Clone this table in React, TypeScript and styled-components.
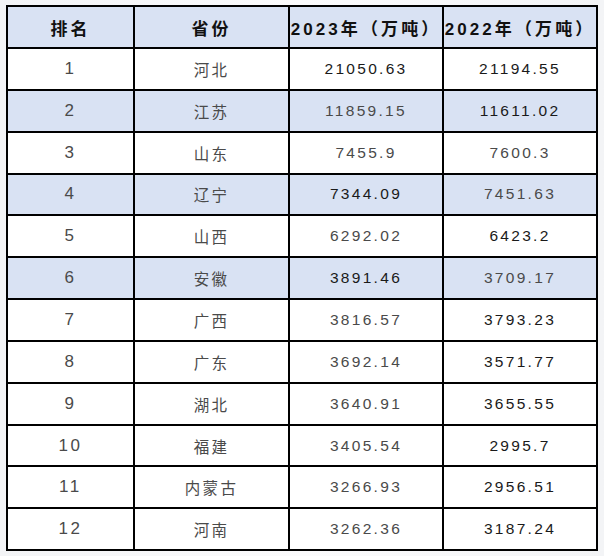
import React from 'react';
import styled, { createGlobalStyle } from 'styled-components';

const GlobalStyle = createGlobalStyle`
    html, body {
        margin: 0;
        padding: 0;
        background: #f5f6f8;
    }
    body {
        font-family: "Liberation Sans", "Noto Sans CJK SC", sans-serif;
    }
`;

const Page = styled.div`
    width: 604px;
    height: 556px;
    box-sizing: border-box;
    padding: 5px 0 0 6px;
    background: linear-gradient(90deg, #f3f4f6 0%, #fbfbfc 50%, #f3f4f6 100%);
`;

const Table = styled.table`
    border-collapse: collapse;
    table-layout: fixed;
    width: 592px;
`;

const HeadCell = styled.th`
    height: 40px;
    padding: 0;
    border: 2px solid #000;
    background: #d9e2f3;
    color: #111;
    font-size: 17px;
    font-weight: bold;
    letter-spacing: 3.1px;
    text-align: center;
    white-space: nowrap;
    overflow: visible;
`;

const Row = styled.tr<{ $shaded: boolean }>`
    background: ${(p) => (p.$shaded ? '#d9e2f3' : '#ffffff')};
`;

const Cell = styled.td<{ $muted?: boolean; $big?: boolean }>`
    height: 39.85px;
    padding: 0;
    border: 2px solid #000;
    color: ${(p) => (p.$muted ? '#4a4a4a' : '#1a1a1a')};
    font-size: ${(p) => (p.$big ? '17px' : '15.5px')};
    letter-spacing: ${(p) => (p.$big ? '2.6px' : '2.3px')};
    text-align: center;
    white-space: nowrap;
`;

type Entry = {
    rank: number
    province: string
    y2023: string
    y2022: string
    muted2023: boolean
    muted2022: boolean
}

const rows: Entry[] = [
    { rank: 1, province: '河北', y2023: '21050.63', y2022: '21194.55', muted2023: false, muted2022: false },
    { rank: 2, province: '江苏', y2023: '11859.15', y2022: '11611.02', muted2023: true, muted2022: false },
    { rank: 3, province: '山东', y2023: '7455.9', y2022: '7600.3', muted2023: true, muted2022: true },
    { rank: 4, province: '辽宁', y2023: '7344.09', y2022: '7451.63', muted2023: false, muted2022: true },
    { rank: 5, province: '山西', y2023: '6292.02', y2022: '6423.2', muted2023: true, muted2022: false },
    { rank: 6, province: '安徽', y2023: '3891.46', y2022: '3709.17', muted2023: false, muted2022: true },
    { rank: 7, province: '广西', y2023: '3816.57', y2022: '3793.23', muted2023: true, muted2022: false },
    { rank: 8, province: '广东', y2023: '3692.14', y2022: '3571.77', muted2023: true, muted2022: false },
    { rank: 9, province: '湖北', y2023: '3640.91', y2022: '3655.55', muted2023: true, muted2022: false },
    { rank: 10, province: '福建', y2023: '3405.54', y2022: '2995.7', muted2023: true, muted2022: false },
    { rank: 11, province: '内蒙古', y2023: '3266.93', y2022: '2956.51', muted2023: true, muted2022: false },
    { rank: 12, province: '河南', y2023: '3262.36', y2022: '3187.24', muted2023: true, muted2022: false },
];

const App = () => {
    return (
        <Page>
            <GlobalStyle />
            <Table>
                <colgroup>
                    <col style={{ width: 127 }} />
                    <col style={{ width: 155 }} />
                    <col style={{ width: 154 }} />
                    <col style={{ width: 154 }} />
                </colgroup>
                <thead>
                    <tr>
                        <HeadCell>排名</HeadCell>
                        <HeadCell>省份</HeadCell>
                        <HeadCell>2023年（万吨）</HeadCell>
                        <HeadCell>2022年（万吨）</HeadCell>
                    </tr>
                </thead>
                <tbody>
                    {rows.map((r) => (
                        <Row key={r.rank} $shaded={r.rank % 2 === 0 && r.rank <= 6}>
                            <Cell $muted $big>{r.rank}</Cell>
                            <Cell $muted>{r.province}</Cell>
                            <Cell $muted={r.muted2023}>{r.y2023}</Cell>
                            <Cell $muted={r.muted2022}>{r.y2022}</Cell>
                        </Row>
                    ))}
                </tbody>
            </Table>
        </Page>
    );
}

export default App;
